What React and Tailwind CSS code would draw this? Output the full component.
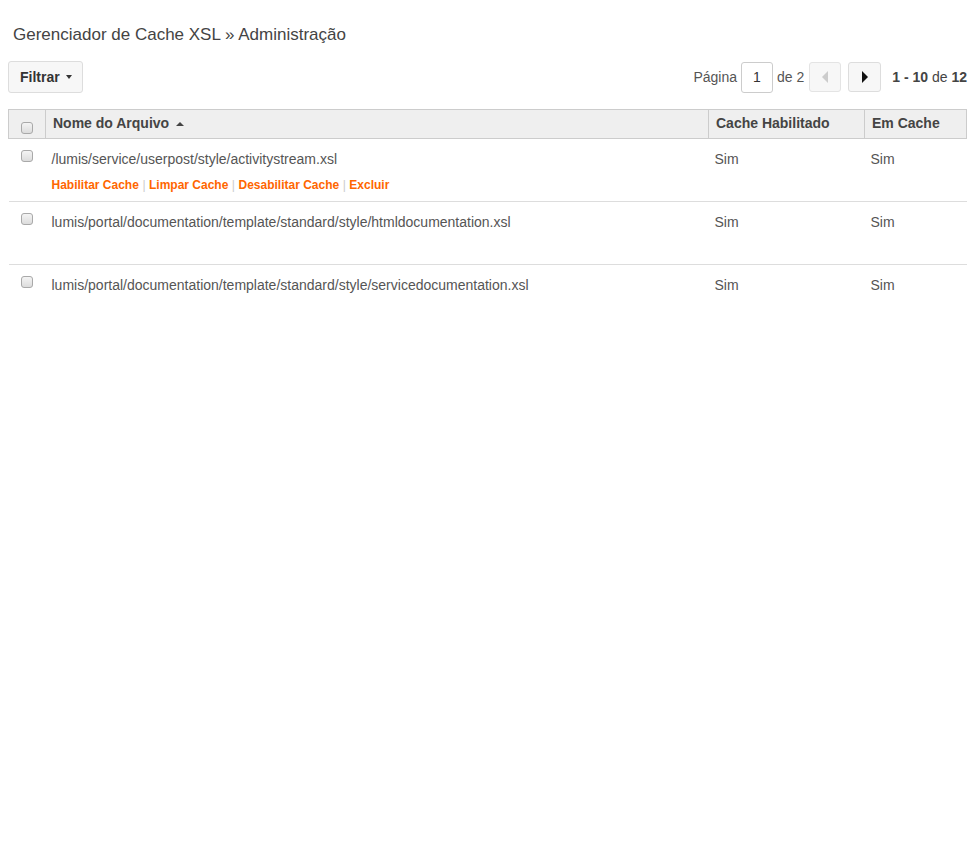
import React from "react";

const rows = [
  { name: "/lumis/service/userpost/style/activitystream.xsl", enabled: "Sim", cached: "Sim", actions: true },
  { name: "lumis/portal/documentation/template/standard/style/htmldocumentation.xsl", enabled: "Sim", cached: "Sim" },
  { name: "lumis/portal/documentation/template/standard/style/servicedocumentation.xsl", enabled: "Sim", cached: "Sim" },
];

const Check = () => (
  <span className="block w-[12px] h-[12px] rounded-[3px] border border-[#a9a9a9] bg-gradient-to-b from-[#f4f4f4] to-[#dcdcdc]" />
);

const Sep = () => <span className="text-[#ccc] font-normal mx-[3.5px]">|</span>;

const App = () => {
  return (
    <div className="min-h-screen bg-white text-[#444] font-['Liberation_Sans',Arial,sans-serif] px-2">
      <h1 className="pt-[24px] pl-[5px] text-[17px] leading-[22px] text-[#444]">
        Gerenciador de Cache XSL » Administração
      </h1>

      {/* Toolbar */}
      <div className="flex items-center justify-between mt-[15px]">
        <button className="h-[32px] pl-[11px] pr-[10px] flex items-center gap-[6px] rounded-[3px] border border-[#ddd] bg-[#f7f7f7] text-[14px] font-bold text-[#333]">
          Filtrar
          <span className="w-0 h-0 border-l-[3px] border-r-[3px] border-t-[4px] border-l-transparent border-r-transparent border-t-[#333]" />
        </button>
        <div className="flex items-center text-[14px] text-[#555]">
          <span>Página</span>
          <span className="ml-[4px] w-[32px] h-[31px] flex items-center justify-center rounded-[3px] border border-[#ccc] text-[#333]">
            1
          </span>
          <span className="ml-[4px]">de 2</span>
          <span className="ml-[5px] w-[32px] h-[30px] flex items-center justify-center rounded-[3px] border border-[#e4e4e4] bg-[#f7f7f7]">
            <span className="w-0 h-0 border-t-[6px] border-b-[6px] border-r-[6px] border-t-transparent border-b-transparent border-r-[#ccc]" />
          </span>
          <span className="ml-[7px] w-[33px] h-[30px] flex items-center justify-center rounded-[3px] border border-[#ddd] bg-[#f7f7f7]">
            <span className="w-0 h-0 border-t-[6px] border-b-[6px] border-l-[6px] border-t-transparent border-b-transparent border-l-[#111]" />
          </span>
          <span className="ml-[11px] text-[#444]">
            <b>1 - 10</b> de <b>12</b>
          </span>
        </div>
      </div>

      {/* Table */}
      <table className="mt-[16px] w-[959px] border-collapse text-[14px]">
        <thead>
          <tr className="bg-[#efefef] h-[29px] text-left">
            <th className="w-[37px] border border-[#ccc] align-top p-0">
              <div className="flex justify-center pt-[12px] pr-[1px]">
                <Check />
              </div>
            </th>
            <th className="border border-[#ccc] pl-[7px] font-bold text-[#444] align-top pt-[3px]">
              <span className="inline-flex items-center gap-[7px]">
                Nome do Arquivo
                <span className="w-0 h-0 border-l-[4px] border-r-[4px] border-b-[4px] border-l-transparent border-r-transparent border-b-[#444]" />
              </span>
            </th>
            <th className="w-[156px] border border-[#ccc] pl-[7px] font-bold text-[#444] align-top pt-[3px]">
              Cache Habilitado
            </th>
            <th className="w-[102px] border border-[#ccc] pl-[7px] font-bold text-[#444] align-top pt-[3px]">
              Em Cache
            </th>
          </tr>
        </thead>
        <tbody>
          {rows.map((r, i) => (
            <tr key={i} className={i < rows.length - 1 ? "border-b border-[#ddd]" : ""}>
              <td className="h-[63px] align-top p-0">
                <div className="flex justify-center pt-[11px] pr-[1px]">
                  <Check />
                </div>
              </td>
              <td className="align-top pl-[6px] pt-[10px]">
                <div className="leading-[20px] text-[#555]">{r.name}</div>
                <div className="h-[27px] pt-[9px] text-[12px] leading-[14px] font-bold text-[#ff6600]">
                  {r.actions && (
                    <>
                      <span>Habilitar Cache</span>
                      <Sep />
                      <span>Limpar Cache</span>
                      <Sep />
                      <span>Desabilitar Cache</span>
                      <Sep />
                      <span>Excluir</span>
                    </>
                  )}
                </div>
              </td>
              <td className="align-top pl-[6px] pt-[10px] leading-[20px] text-[#555]">{r.enabled}</td>
              <td className="align-top pl-[6px] pt-[10px] leading-[20px] text-[#555]">{r.cached}</td>
            </tr>
          ))}
        </tbody>
      </table>
    </div>
  );
};

export default App;
